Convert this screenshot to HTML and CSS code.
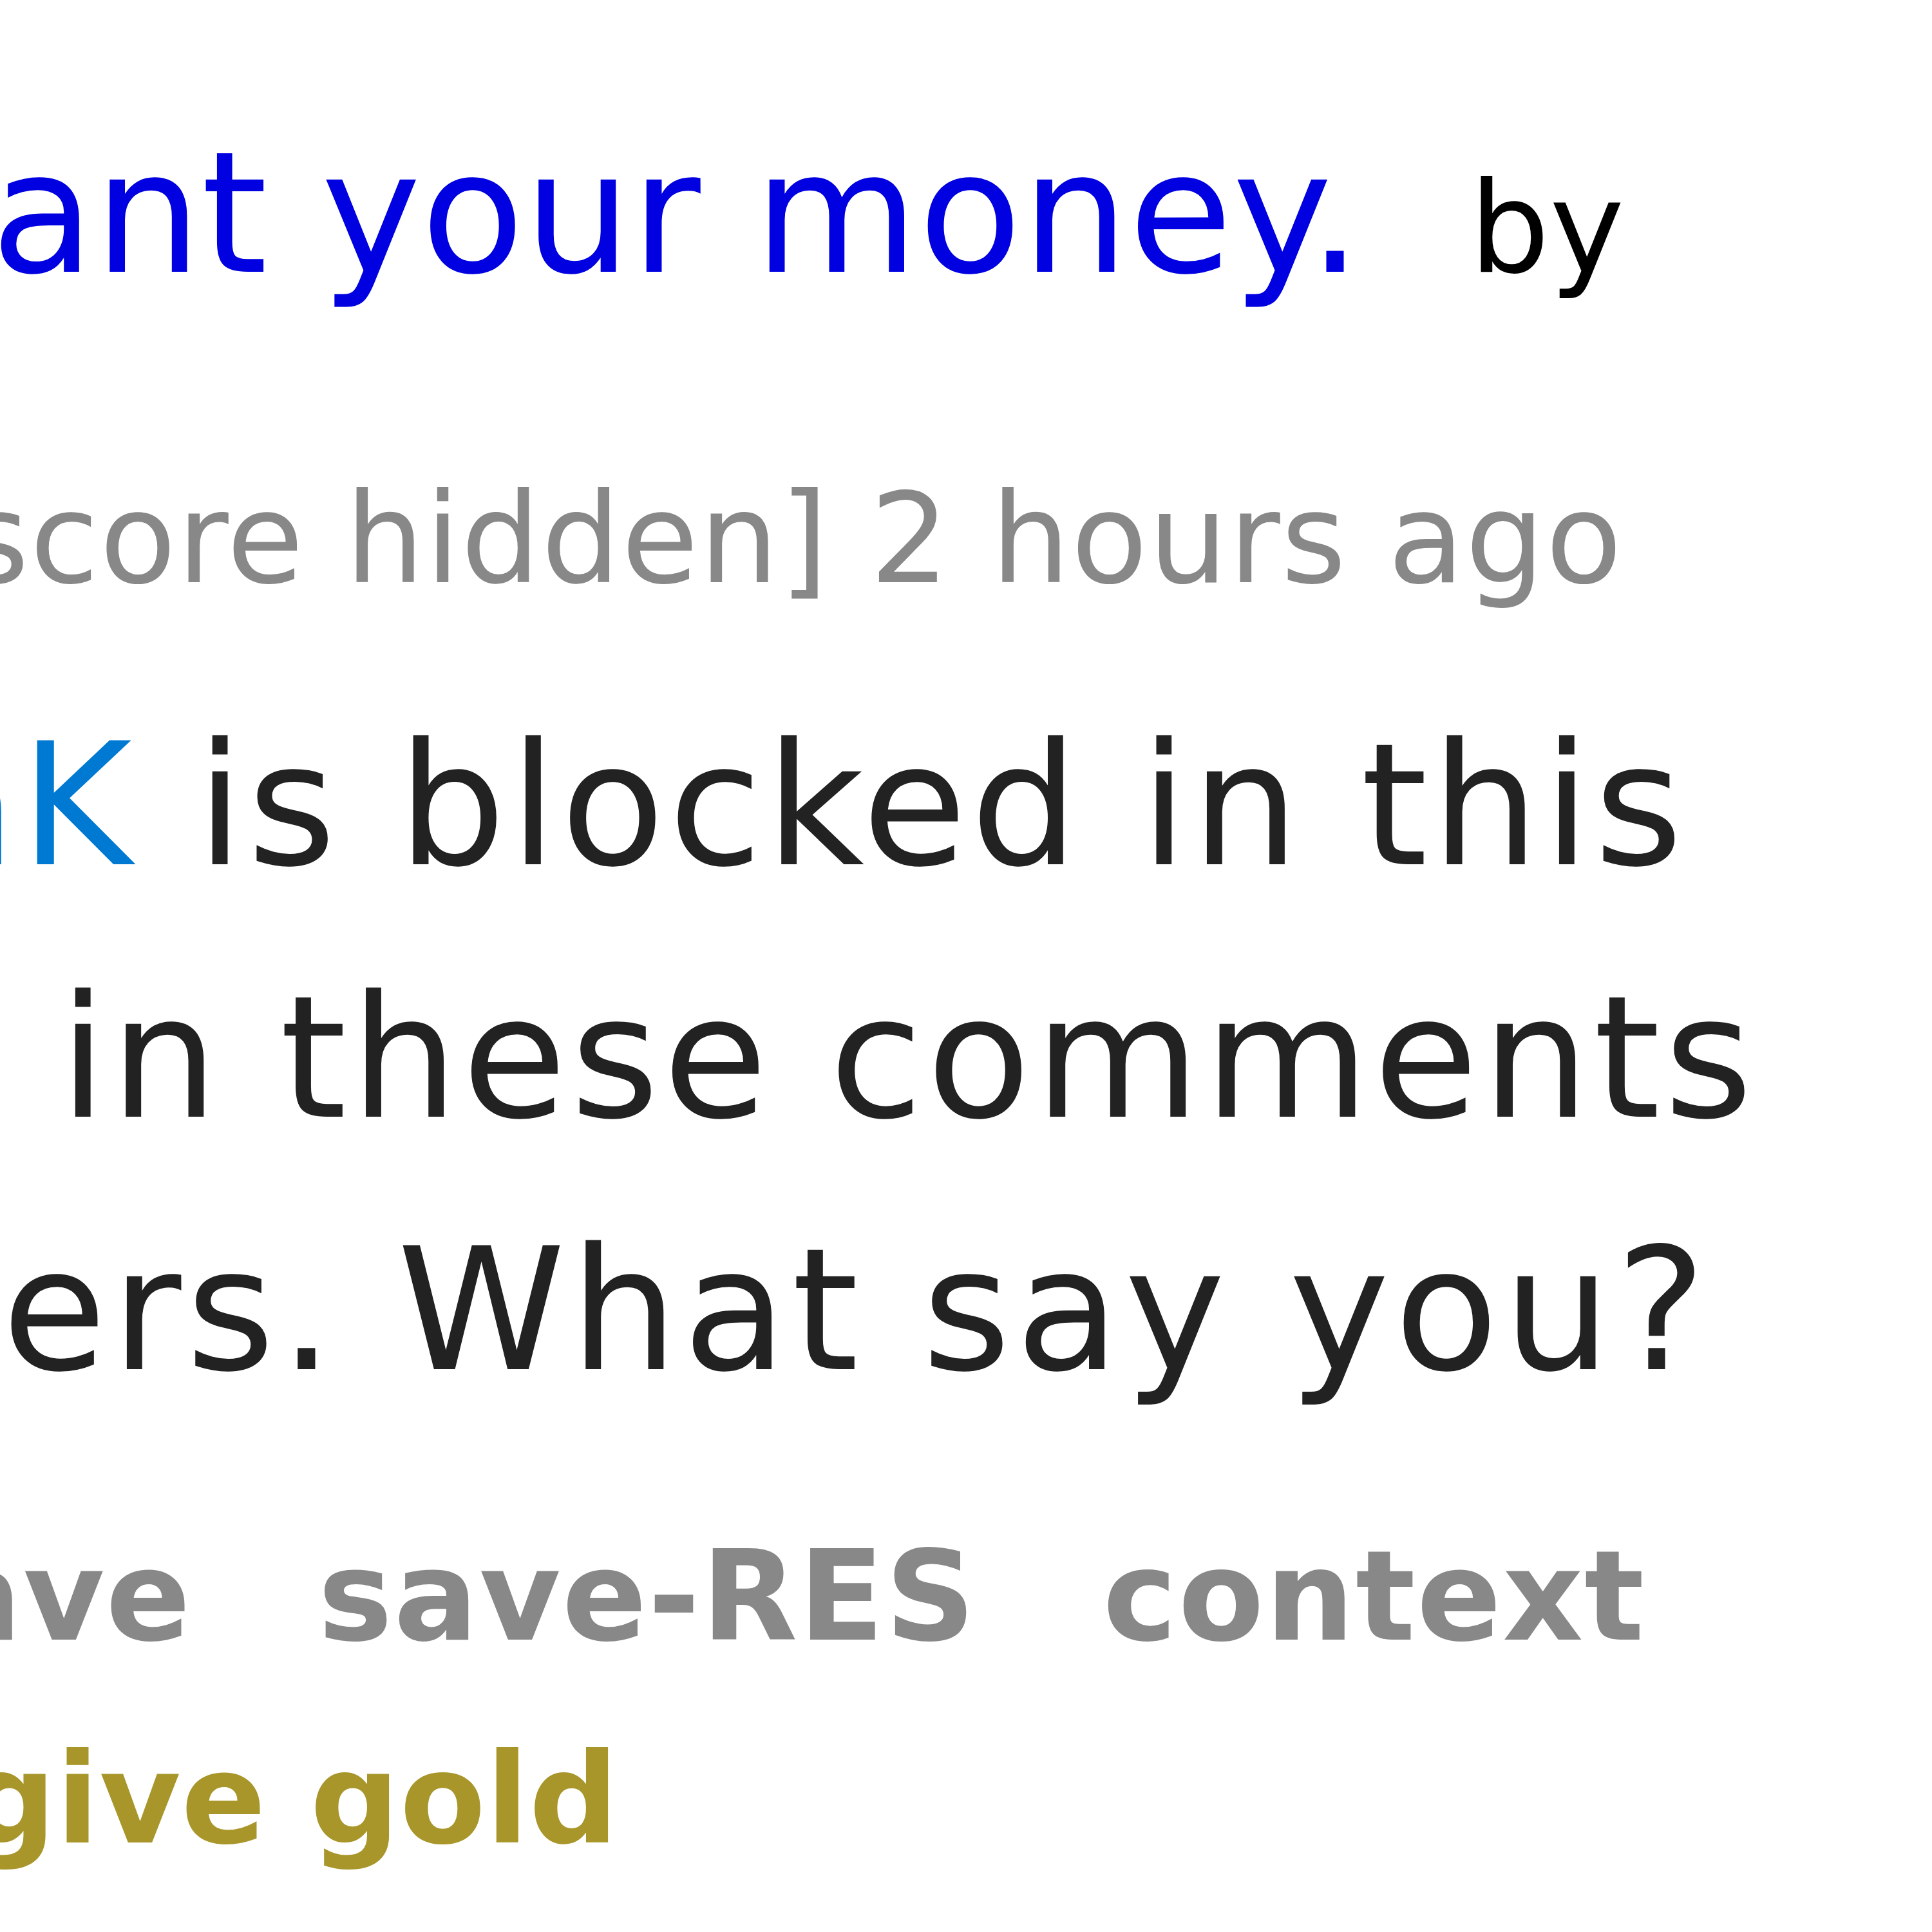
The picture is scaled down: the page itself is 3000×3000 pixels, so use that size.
FILE: index.html
```html
<!DOCTYPE html>
<html lang="en">
  <head>
    <meta charset="UTF-8" />
    <meta name="viewport" content="width=device-width, initial-scale=1.0" />
    <title>Comment</title>
    <link rel="stylesheet" href="styles.css">
  </head>
  <body>
    <div class="comment">
      <p class="parent">
        <a class="title" href="#">ant your money.</a><span class="by">by</span>
      </p>

      <p class="tagline">score hidden] 2 hours ago</p>

      <div class="md">
        <p>
          <span class="line line-1"><a class="user" href="#">aK</a> is blocked in this</span>
          <span class="line line-2">in these comments</span>
          <span class="line line-3">ers. What say you?</span>
        </p>
      </div>

      <ul class="flat-list buttons">
        <li class="first-cut"><a href="#">ave</a></li>
        <li><a href="#">save-RES</a></li>
        <li><a href="#">context</a></li>
      </ul>
      <ul class="flat-list buttons">
        <li class="gold-cut"><a class="give-gold" href="#">give gold</a></li>
      </ul>
    </div>
  </body>
</html>
```

FILE: styles.css
```css
body {
  margin: 0;
  background: #fff;
  font-family: "DejaVu Sans", Verdana, sans-serif;
  overflow: hidden;
}

a {
  text-decoration: none;
}

.comment {
  padding-top: 175px;
}

.parent {
  margin: 0 0 0 -14px;
  font-size: 262px;
  line-height: 1.2;
  white-space: nowrap;
}

.parent .title {
  color: #0000e0;
}

.parent .by {
  font-size: 196px;
  color: #000;
  margin-left: 167px;
}

.tagline {
  margin: 232px 0 0 -56px;
  font-size: 194px;
  line-height: 1.2;
  letter-spacing: 1.5px;
  color: #888;
  white-space: nowrap;
}

.md {
  margin-top: 101px;
  font-size: 264px;
  line-height: 392px;
  letter-spacing: 6px;
  color: #222;
}

.md p {
  margin: 0;
}

.md .user {
  color: #0079d3;
}

.line {
  display: block;
  white-space: nowrap;
}

.line-1 {
  margin-left: -136px;
}

.line-1 .user {
  margin-right: 4px;
}

.line-2 {
  margin-left: 92px;
}

.line-3 {
  margin-left: 3px;
  letter-spacing: 7.5px;
}

.flat-list {
  list-style: none;
  margin: 0;
  padding: 0;
  display: flex;
  gap: 196px;
  font-size: 194px;
  font-weight: bold;
  line-height: 1.2;
  letter-spacing: 2px;
  white-space: nowrap;
}

.flat-list a {
  color: #888;
}

.buttons {
  margin-top: 132px;
}

.buttons + .buttons {
  margin-top: 82px;
}

.first-cut {
  margin-left: -97px;
}

.gold-cut {
  margin-left: -52px;
  letter-spacing: 0.5px;
}

.flat-list .give-gold {
  color: #a8962a;
}
```
